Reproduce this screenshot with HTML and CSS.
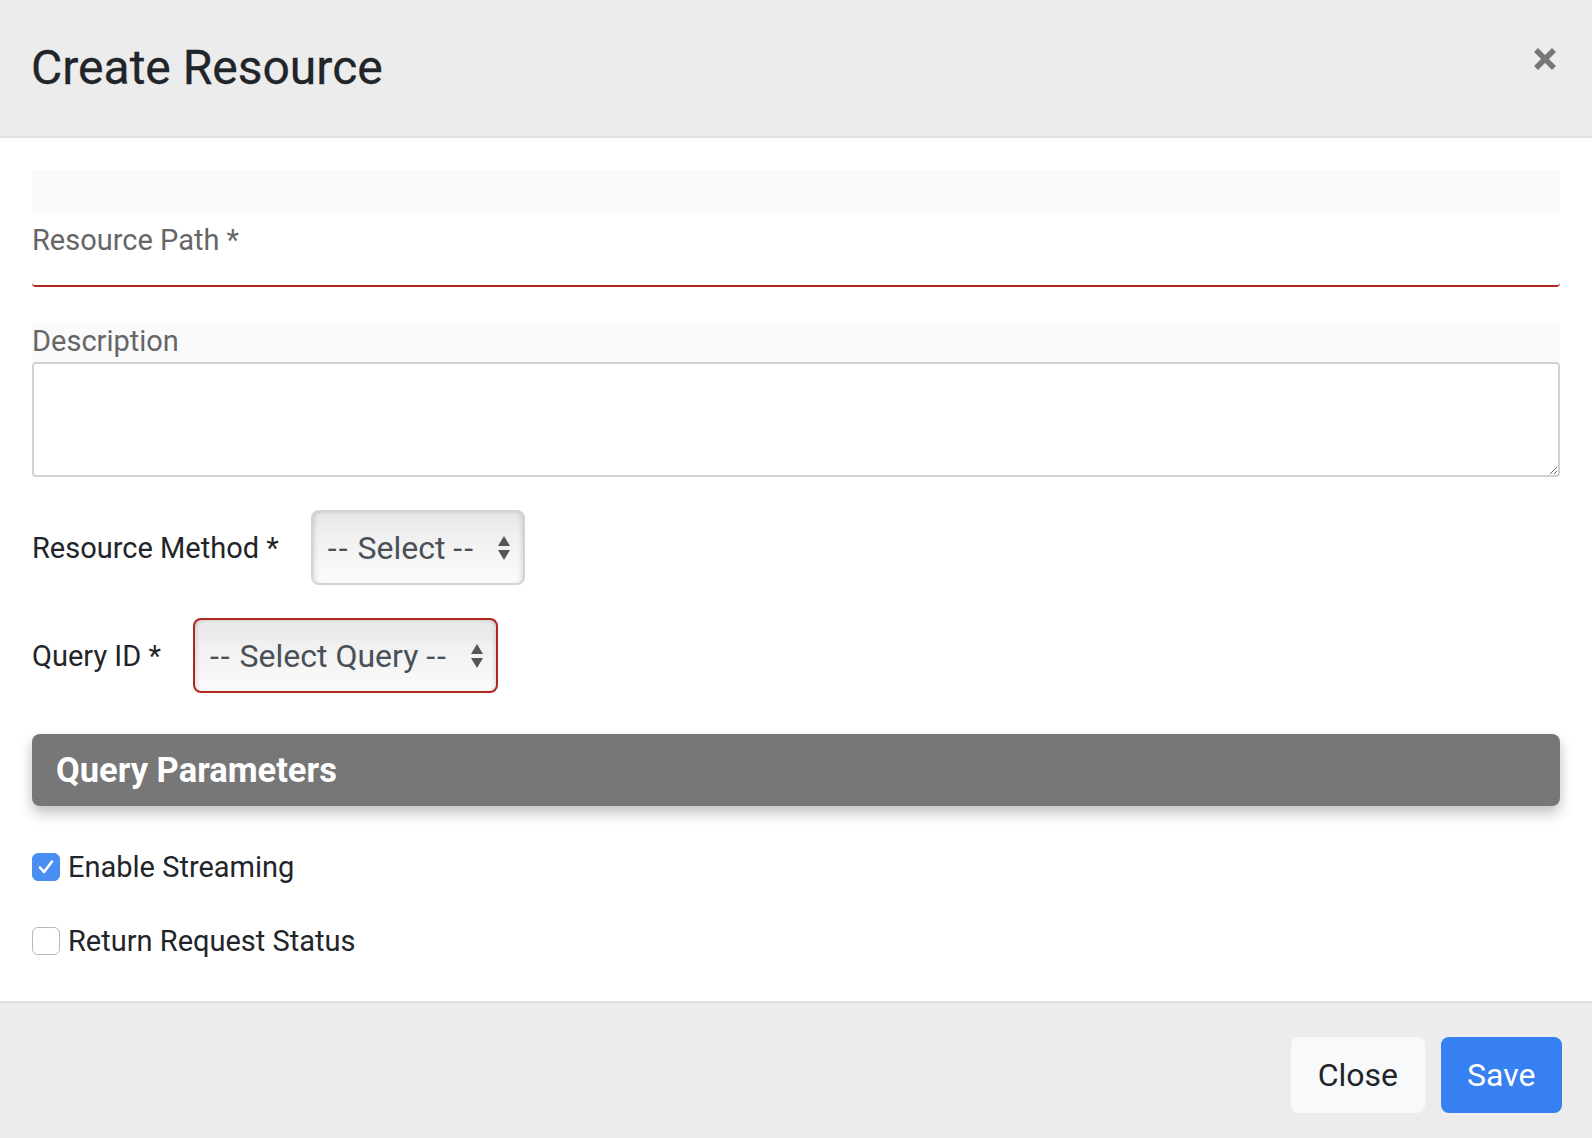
FILE: index.html
```html
<!DOCTYPE html>
<html lang="en">
<head>
<meta charset="utf-8">
<title>Create Resource</title>
<link rel="stylesheet" href="styles.css">
</head>
<body>
<div class="modal">
  <header class="modal-header">
    <h4 class="modal-title">Create Resource</h4>
    <button class="close" type="button" aria-label="Close">
      <svg width="24" height="24" viewBox="0 0 24 24"><path d="M3 3 L21 21 M21 3 L3 21" stroke="#777" stroke-width="5.5" fill="none"/></svg>
    </button>
  </header>
  <main class="modal-body">
    <div class="group group-path">
      <div class="band"></div>
      <div class="float-input invalid"><span class="float-label">Resource Path *</span></div>
    </div>
    <div class="group group-desc">
      <div class="band band-label">Description</div>
      <textarea class="textarea"></textarea>
    </div>
    <div class="inline-row row-method">
      <label class="row-label">Resource Method *</label>
      <div class="select">
        <span class="select-text"><span class="dash">--</span> Select <span class="dash">--</span></span>
        <svg class="arrows" width="12" height="24" viewBox="0 0 12 24"><path d="M0 10 L6 0 L12 10 Z M0 14 L12 14 L6 24 Z" fill="#555"/></svg>
      </div>
    </div>
    <div class="inline-row row-query">
      <label class="row-label">Query ID *</label>
      <div class="select select-invalid">
        <span class="select-text"><span class="dash">--</span> Select Query <span class="dash">--</span></span>
        <svg class="arrows" width="12" height="24" viewBox="0 0 12 24"><path d="M0 10 L6 0 L12 10 Z M0 14 L12 14 L6 24 Z" fill="#555"/></svg>
      </div>
    </div>
    <div class="panel">Query Parameters</div>
    <div class="check-row check-first">
      <span class="checkbox checked"><svg width="28" height="28" viewBox="0 0 28 28"><path d="M8 14.5 L12 19 L20 8.5" stroke="#fff" stroke-width="2.6" fill="none" stroke-linecap="round" stroke-linejoin="round"/></svg></span>
      <span class="check-label">Enable Streaming</span>
    </div>
    <div class="check-row">
      <span class="checkbox"></span>
      <span class="check-label">Return Request Status</span>
    </div>
  </main>
  <footer class="modal-footer">
    <button class="btn btn-light" type="button">Close</button>
    <button class="btn btn-primary" type="button">Save</button>
  </footer>
</div>
</body>
</html>
```

FILE: styles.css
```css
* { box-sizing: border-box; }
html, body { margin: 0; padding: 0; }
body {
  font-family: Roboto, "Liberation Sans", sans-serif;
  color: #212529;
  background: #fff;
}
.modal {
  width: 1592px;
  height: 1138px;
  display: flex;
  flex-direction: column;
}
.modal-header {
  flex: none;
  height: 138px;
  background: #ececec;
  border-bottom: 2px solid #e0e1e6;
  display: flex;
  justify-content: space-between;
  align-items: flex-start;
  padding: 0 35px 0 31px;
}
.modal-title {
  margin: 39px 0 0;
  font-size: 48px;
  font-weight: 400;
  line-height: 57.6px;
  color: #212529;
  -webkit-text-stroke: 0.3px #212529;
}
.close {
  margin-top: 47px;
  padding: 0;
  border: 0;
  background: transparent;
  width: 24px;
  height: 24px;
  display: block;
}
.close svg { display: block; }
.modal-body {
  flex: 1;
  padding: 32px 32px 0;
}
.group-path { margin-bottom: 34px; }
.group-desc { margin-bottom: 33px; }
.band {
  background: #fafafa;
  height: 43px;
}
.band-label {
  height: 41px;
  font-size: 29px;
  line-height: 41px;
  color: #666;
}
.float-input {
  height: 74px;
  border-bottom: 2px solid #b0271f;
  border-radius: 4px;
  padding-top: 9px;
}
.float-label {
  font-size: 29px;
  line-height: 36px;
  color: #666;
}
.textarea {
  display: block;
  width: 100%;
  height: 115px;
  border: 2px solid #cfd3d8;
  border-radius: 4px;
  margin: 0;
  font: inherit;
  resize: vertical;
}
.inline-row {
  display: flex;
  align-items: center;
  gap: 32px;
  margin-bottom: 33px;
}
.row-query { margin-bottom: 41px; }
.row-label {
  font-size: 29px;
  color: #212529;
}
.select {
  height: 75px;
  display: flex;
  align-items: center;
  gap: 23px;
  padding: 0 13px 0 15px;
  border: 2px solid #d0d4d9;
  border-radius: 8px;
  background: linear-gradient(#e7e7e7 0%, #f1f1f1 40%, #fbfbfb 100%);
  box-shadow: inset 4px 0 5px -3px rgba(0,0,0,.14), inset -4px 0 5px -3px rgba(0,0,0,.14), inset 0 2px 3px -1px rgba(0,0,0,.06);
}
.select-invalid { border-color: #b0271f; }
.select-text {
  font-size: 32px;
  color: #495057;
  white-space: pre;
}
.dash { letter-spacing: 2px; }
.arrows { display: block; flex: none; }
.panel {
  height: 72px;
  background: #777;
  border-radius: 8px;
  box-shadow: 0 7px 14px rgba(0,0,0,.25);
  color: #fff;
  font-weight: 700;
  font-size: 34.5px;
  display: flex;
  align-items: center;
  padding: 0 24px;
  margin-bottom: 47px;
}
.check-row {
  display: flex;
  align-items: center;
  gap: 8px;
  height: 28px;
}
.check-first { margin-bottom: 46px; }
.checkbox {
  width: 28px;
  height: 28px;
  border-radius: 6px;
  border: 1.5px solid #b8b8b8;
  background: #fff;
  flex: none;
  display: block;
}
.checkbox.checked {
  background: #4b8ef1;
  border-color: #4b8ef1;
}
.checkbox svg { display: block; margin: -1.5px; }
.check-label {
  font-size: 29px;
  color: #212529;
}
.modal-footer {
  flex: none;
  height: 137px;
  background: #ececec;
  border-top: 2px solid #e0e1e6;
  display: flex;
  justify-content: flex-end;
  align-items: flex-start;
  gap: 16px;
  padding: 34px 30px 0 0;
}
.btn {
  height: 76px;
  padding: 0 26.5px;
  border: 0;
  border-radius: 8px;
  font-family: inherit;
  font-size: 32px;
  line-height: 76px;
}
.btn-light { background: #f8f9fa; color: #212529; }
.btn-primary { background: #3680f2; color: #fff; }
```
